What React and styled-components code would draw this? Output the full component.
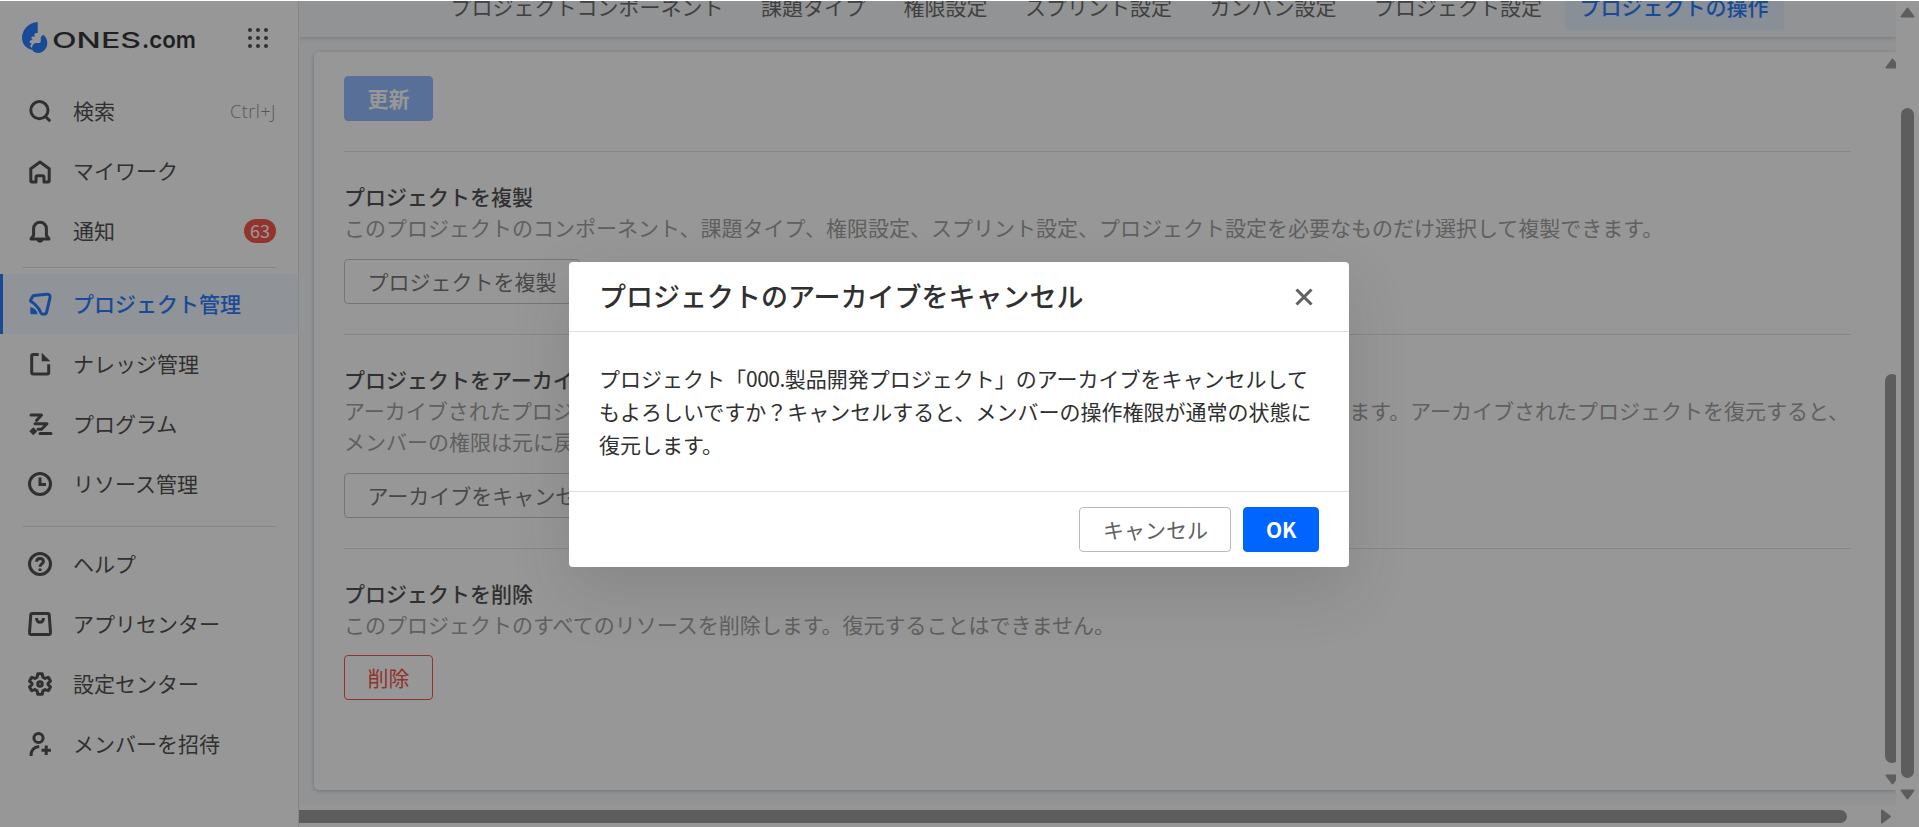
import styled, { createGlobalStyle, css } from "styled-components";

const GlobalStyle = createGlobalStyle`
    * {
        box-sizing: border-box;
    }

    body {
        margin: 0;
        overflow: hidden;
        background: #fff;
        color: #303030;
        font-family: "Noto Sans CJK JP", "Noto Sans", sans-serif;
        font-size: 21px;
    }

    svg {
        display: block;
        flex: none;
    }
`;

const Page = styled.div`
    display: flex;
    height: 827px;
    padding-top: 1px;
    overflow: hidden;
`;

const Sidebar = styled.aside`
    flex: none;
    width: 299px;
    border-right: 1px solid #dedede;
`;

const Brand = styled.header`
    display: flex;
    align-items: center;
    justify-content: space-between;
    height: 80px;
    padding: 0 30px 6px 21px;
`;

const NavItem = styled.a`
    display: flex;
    align-items: center;
    gap: 19px;
    height: 60px;
    padding: 0 22px 0 26px;
    line-height: 30px;

    ${({ $active }) =>
        $active &&
        css`
            padding-left: 23px;
            border-left: 3px solid #0064ff;
            background: #f0f6ff;
            color: #0064ff;
            font-weight: 500;
        `}
`;

const NavLabel = styled.span`
    padding-bottom: 2px;
`;

const Separator = styled.hr`
    height: 1px;
    margin: ${({ $top }) => $top}px 22px ${({ $bottom }) => $bottom}px;
    border: 0;
    background: #dedede;
`;

const Shortcut = styled.span`
    margin-left: auto;
    color: #808080;
    font-family: "Open Sans", sans-serif;
    font-weight: 300;
    font-size: 18px;
    letter-spacing: 0.5px;
`;

const Badge = styled.span`
    margin-left: auto;
    width: 32px;
    height: 24px;
    border-radius: 12px;
    background: #f5392b;
    color: #fff;
    font-size: 18px;
    line-height: 23px;
    text-align: center;
`;

const Main = styled.main`
    display: flex;
    flex-direction: column;
    width: 1597px;
    overflow: hidden;
    background: #f5f7f9;
`;

const TabBar = styled.nav`
    display: flex;
    flex: none;
    align-items: flex-end;
    gap: 7.5px;
    height: 36px;
    padding: 0 0 7px 136.5px;
    background: #f5f7f9;
    box-shadow: 0 1px 5px rgba(48, 48, 48, 0.25);
`;

const Tab = styled.a`
    flex: none;
    height: 45px;
    padding: 0 15px;
    border-radius: 4px;
    line-height: 43px;
    white-space: nowrap;
    color: #505050;

    ${({ $active }) =>
        $active &&
        css`
            background: #e2eeff;
            color: #0064ff;
            font-weight: 500;
        `}
`;

const Card = styled.div`
    display: flex;
    justify-content: space-between;
    flex: none;
    height: 738px;
    margin: 15px 0 0 15px;
    border-radius: 5px 0 0 5px;
    background: #fff;
    box-shadow: 0 1px 4px rgba(48, 48, 48, 0.35);
`;

const Content = styled.div`
    width: 1537px;
    padding: 24px 0 0 30px;
`;

const Section = styled.section`
    padding: 29px 0 30px;
    border-top: 1px solid #dedede;

    &:first-child {
        padding: 0 0 30px;
        border: 0;
    }
`;

const SectionTitle = styled.h3`
    margin: 0;
    font-size: 21px;
    font-weight: 500;
    line-height: 31px;
`;

const Description = styled.p`
    margin: 0 0 ${({ $gap }) => $gap || 16}px;
    color: #909090;
    line-height: 31px;
    white-space: nowrap;
`;

const tones = {
    plain: css`
        border-color: #bababa;
        background: #fff;
        color: #606060;
    `,
    danger: css`
        border-color: #f0362a;
        background: #fff;
        color: #f0362a;
    `,
    primary: css`
        padding: 0 21.5px;
        border-color: #0064ff;
        background: #0064ff;
        color: #fff;
        font-weight: 700;
    `,
    disabled: css`
        border-color: #80b1ff;
        background: #80b1ff;
        color: #fff;
        font-weight: 700;
    `,
};

const Button = styled.button`
    display: block;
    height: 45px;
    padding: 0 22.5px;
    border: 1px solid;
    border-radius: 4px;
    font: inherit;
    line-height: 43px;
    ${({ $tone }) => tones[$tone || "plain"]}
`;

const InnerScroll = styled.div`
    display: flex;
    flex-direction: column;
    justify-content: space-between;
    width: 11px;
    padding: 6px 0 5px;
    overflow: hidden;
`;

const InnerThumb = styled.div`
    width: 14px;
    height: 389px;
    margin-top: 294px;
    border-radius: 7px;
    background: #8b8b8b;
`;

const BottomScroll = styled.div`
    display: flex;
    align-items: center;
    justify-content: space-between;
    flex: none;
    height: 23px;
    margin-top: 15px;
    padding: 0 4px 0 0;
    background: #fcfcfc;
`;

const BottomThumb = styled.div`
    width: 1548px;
    height: 13px;
    border-radius: 0 7px 7px 0;
    background: #8b8b8b;
`;

const OuterScroll = styled.div`
    display: flex;
    flex-direction: column;
    align-items: center;
    width: 23px;
    padding: 6px 0 27px;
`;

const OuterThumb = styled.div`
    width: 13px;
    height: 670px;
    margin: 90px 0 auto;
    border-radius: 7px;
    background: #8b8b8b;
`;

const Overlay = styled.div`
    position: absolute;
    inset: 1px 0 0;
    display: flex;
    align-items: flex-start;
    padding: 261px 0 0 569px;
    background: rgba(48, 48, 48, 0.5);
`;

const Dialog = styled.div`
    width: 780px;
    border-radius: 4px;
    background: #fff;
    box-shadow: 0 24px 60px rgba(48, 48, 48, 0.16);
`;

const DialogHeader = styled.div`
    display: flex;
    align-items: center;
    justify-content: space-between;
    height: 70px;
    padding: 0 36px 0 30px;
    border-bottom: 1px solid #dcdfe2;
`;

const DialogTitle = styled.h2`
    margin: 0;
    padding-bottom: 1px;
    font-size: 27px;
    font-weight: 500;
    line-height: 36px;
`;

const DialogBody = styled.p`
    margin: 0;
    padding: 30px;
    line-height: 33px;
    white-space: nowrap;
`;

const ProjectCode = styled.span`
    letter-spacing: -0.5px;
`;

const DialogFooter = styled.div`
    display: flex;
    justify-content: flex-end;
    gap: 12px;
    padding: 15px 30px;
    border-top: 1px solid #dcdfe2;
`;

const Icon = ({ children }) => (
    <svg width="28" height="28" viewBox="0 0 28 28" fill="none" stroke="currentColor" strokeWidth="3">
        {children}
    </svg>
);

const icons = {
    search: (
        <>
            <circle cx="13.4" cy="13.2" r="8.6" />
            <path d="M19.5 19.5l4.7 4.7" />
        </>
    ),
    home: <path d="M6 25a1.200 1.200 0 01-1.200-1.200V11.800L14 5l9.200 6.800v12A1.200 1.200 0 0122 25h-4v-4.600a1.600 1.600 0 00-1.600-1.600h-4.800a1.600 1.600 0 00-1.600 1.600V25z" strokeLinejoin="round" />,
    bell: (
        <>
            <path d="M5 22h18l-2.600-3.600v-6.800a6.400 6.400 0 00-12.800 0v6.800z" strokeLinejoin="round" />
            <path d="M10.500 23h7c-.7 1.800-2 2.800-3.500 2.800s-2.800-1-3.500-2.800z" fill="currentColor" stroke="none" />
        </>
    ),
    project: (
        <>
            <path d="M4.700 11.200c-.3-.4-.2-.9 0-1.300l1.800-3.200c.4-.6.900-1 1.600-1.100L21 4.200c2-.2 3.400 1.200 3.100 3L20.700 21.800c-.3 1.400-1.200 2.200-2.500 2.300l-1.300.1c-1 0-1.700-.5-2.100-1.500-2.300-5.700-4.600-8.200-10.100-11.500z" strokeLinejoin="round" />
            <path d="M4.300 17.300c4.200.5 6.800 3 7.200 7H5.800a1.500 1.500 0 01-1.500-1.500z" fill="currentColor" stroke="none" />
        </>
    ),
    wiki: (
        <>
            <path d="M12.700 4.500H7.200A1.500 1.500 0 005.700 6v16.500a1.500 1.500 0 001.500 1.500h14a1.500 1.500 0 001.500-1.500v-8.200" />
            <path d="M15.700 2.800l8.700 8.500h-8.700z" fill="currentColor" stroke="none" />
        </>
    ),
    program: (
        <>
            <path d="M5 5h10.500l-5 5.500M9 13.800h12l-5.500 5.500h-3.500M14 23.500h11" strokeLinecap="round" strokeLinejoin="round" />
            <path d="M7.300 17.300l4 4-4 4-4-4z" fill="currentColor" stroke="none" />
        </>
    ),
    clock: (
        <>
            <circle cx="14" cy="14" r="10.500" />
            <path d="M14 7.500v7h6" />
        </>
    ),
    help: (
        <>
            <circle cx="14" cy="14" r="10.500" />
            <path d="M10.600 11.800c0-2 1.400-3.300 3.400-3.300s3.400 1.200 3.400 3c0 2.300-3.400 2.500-3.400 5.200M14 18.500v2.600" />
        </>
    ),
    store: <path d="M6.200 3.600h15.600a1.400 1.400 0 011.400 1.300l1.300 17.800a1.500 1.500 0 01-1.500 1.700H5a1.500 1.500 0 01-1.500-1.700L4.800 4.900a1.400 1.400 0 011.400-1.300zM10.700 8v1a3.300 3.300 0 006.600 0V8" />,
    gear: (
        <>
            <path
                d="M11.800 3.800h4.400l.7 3.300 2.200 1.300 3.200-1.100 2.200 3.800-2.500 2.200v1.400l2.500 2.200-2.200 3.800-3.200-1.100-2.200 1.300-.7 3.300h-4.400l-.7-3.300-2.200-1.300-3.200 1.100-2.200-3.800L6 14.700v-1.400l-2.500-2.200 2.200-3.800 3.200 1.100 2.200-1.300z"
                strokeLinejoin="round"
            />
            <circle cx="14" cy="14" r="2.300" />
        </>
    ),
    invite: (
        <>
            <circle cx="12.500" cy="8" r="4.600" />
            <path d="M5 26c0-5.800 3-9.200 8.200-9.600M20.200 15.500v9.400M15.500 20.200h9.400" />
        </>
    ),
};

const Arrow = ({ direction }) => {
    const turn = { up: 0, right: 90, down: 180 }[direction];
    return (
        <svg width="15" height={direction === "right" ? 15 : 11} viewBox={direction === "right" ? "-1.500 -2 15 15" : "0 0 15 11"}>
            <path d="M7.500 1.500L13.500 9.500h-12z" fill="#8b8b8b" stroke="#8b8b8b" strokeWidth="2" strokeLinejoin="round" transform={`rotate(${turn} 7.500 5.500)`} />
        </svg>
    );
};

const Logo = () => (
    <svg width="180" height="34" viewBox="0 0 180 34">
        <path d="M16.700 1v11c-1.300-.2-2.600.2-3.400 1.300l.5 2.400-2.600-.3-1 1.500 1.500 2-2.700.7-.5 2 2.200 1-1.500 2.200.8 1.600 2 .1-.3 2.500C4.500 27.500 1 22.500 1 16.800 1 8.500 8 1.500 16.700 1z" fill="#0064ff" />
        <path d="M22.300 13.800c2.600 2 4 4.700 4 8 0 6-4.300 10.200-9.300 10.200-3.700 0-6-2.200-6-5.200 0-3.200 2.500-5.300 5.500-4.800 2.500.4 3.500-.6 3.200-2.800-.3-2.300.4-4.500 2.600-5.400z" fill="#0064ff" />
        <text x="31" y="26.500" fontFamily="Inter" fontWeight="500" fontSize="22" textLength="89" lengthAdjust="spacingAndGlyphs" fill="#111">
            ONES
        </text>
        <text x="121" y="26.500" fontFamily="Inter" fontWeight="600" fontSize="23.500" textLength="54" lengthAdjust="spacingAndGlyphs" fill="#111">
            .com
        </text>
    </svg>
);

const AppsGrid = () => (
    <svg width="20" height="20" viewBox="0 0 20 20" fill="#303030">
        {[2, 10, 18].map((y) => [2, 10, 18].map((x) => <circle key={`${x}-${y}`} cx={x} cy={y} r="2" />))}
    </svg>
);

const Item = ({ icon, label, active, children }) => (
    <NavItem $active={active}>
        <Icon>{icons[icon]}</Icon>
        <NavLabel>{label}</NavLabel>
        {children}
    </NavItem>
);

const tabs = ["プロジェクトコンポーネント", "課題タイプ", "権限設定", "スプリント設定", "カンバン設定", "プロジェクト設定", "プロジェクトの操作"];

export default function App() {
    return (
        <>
            <GlobalStyle />
            <Page>
                <Sidebar>
                    <Brand>
                        <Logo />
                        <AppsGrid />
                    </Brand>
                    <Item icon="search" label="検索">
                        <Shortcut>Ctrl+J</Shortcut>
                    </Item>
                    <Item icon="home" label="マイワーク" />
                    <Item icon="bell" label="通知">
                        <Badge>63</Badge>
                    </Item>
                    <Separator $top={6} $bottom={6} />
                    <Item icon="project" label="プロジェクト管理" active />
                    <Item icon="wiki" label="ナレッジ管理" />
                    <Item icon="program" label="プログラム" />
                    <Item icon="clock" label="リソース管理" />
                    <Separator $top={12} $bottom={7} />
                    <Item icon="help" label="ヘルプ" />
                    <Item icon="store" label="アプリセンター" />
                    <Item icon="gear" label="設定センター" />
                    <Item icon="invite" label="メンバーを招待" />
                </Sidebar>
                <Main>
                    <TabBar>
                        {tabs.map((tab, i) => (
                            <Tab key={tab} $active={i === tabs.length - 1}>
                                {tab}
                            </Tab>
                        ))}
                    </TabBar>
                    <Card>
                        <Content>
                            <Section>
                                <Button $tone="disabled">更新</Button>
                            </Section>
                            <Section>
                                <SectionTitle>プロジェクトを複製</SectionTitle>
                                <Description>このプロジェクトのコンポーネント、課題タイプ、権限設定、スプリント設定、プロジェクト設定を必要なものだけ選択して複製できます。</Description>
                                <Button>プロジェクトを複製</Button>
                            </Section>
                            <Section>
                                <SectionTitle>プロジェクトをアーカイブ</SectionTitle>
                                <Description>
                                    アーカイブされたプロジェクトは読み取り専用となり、メンバーは全課題の作成や編集が一切できなくなります。アーカイブされたプロジェクトを復元すると、
                                    <br />
                                    メンバーの権限は元に戻ります。
                                </Description>
                                <Button>アーカイブをキャンセル</Button>
                            </Section>
                            <Section>
                                <SectionTitle>プロジェクトを削除</SectionTitle>
                                <Description $gap={15}>このプロジェクトのすべてのリソースを削除します。復元することはできません。</Description>
                                <Button $tone="danger">削除</Button>
                            </Section>
                        </Content>
                        <InnerScroll>
                            <Arrow direction="up" />
                            <InnerThumb />
                            <Arrow direction="down" />
                        </InnerScroll>
                    </Card>
                    <BottomScroll>
                        <BottomThumb />
                        <Arrow direction="right" />
                    </BottomScroll>
                </Main>
                <OuterScroll>
                    <Arrow direction="up" />
                    <OuterThumb />
                    <Arrow direction="down" />
                </OuterScroll>
            </Page>
            <Overlay>
                <Dialog role="dialog">
                    <DialogHeader>
                        <DialogTitle>プロジェクトのアーカイブをキャンセル</DialogTitle>
                        <svg width="18" height="18" viewBox="0 0 18 18" stroke="#606060" strokeWidth="3">
                            <path d="M1.500 1.500l15 15M16.500 1.500l-15 15" />
                        </svg>
                    </DialogHeader>
                    <DialogBody>
                        プロジェクト「<ProjectCode>000.</ProjectCode>製品開発プロジェクト」のアーカイブをキャンセルして
                        <br />
                        もよろしいですか？キャンセルすると、メンバーの操作権限が通常の状態に
                        <br />
                        復元します。
                    </DialogBody>
                    <DialogFooter>
                        <Button>キャンセル</Button>
                        <Button $tone="primary">OK</Button>
                    </DialogFooter>
                </Dialog>
            </Overlay>
        </>
    );
}
